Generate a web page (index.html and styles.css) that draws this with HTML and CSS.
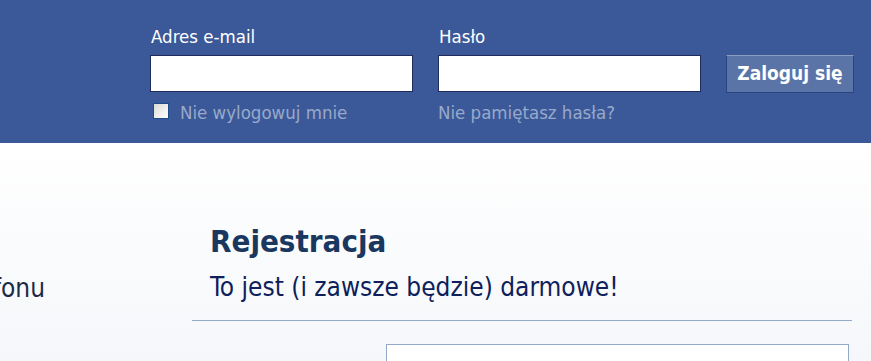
FILE: index.html
```html
<!DOCTYPE html>
<html lang="pl">
<head>
<meta charset="UTF-8" />
<title>Facebook - logowanie</title>
<link rel="stylesheet" href="styles.css">
</head>
<body>

  <div class="topbar">
    <form class="login" onsubmit="return false;">
      <div class="login-field">
        <label class="field-label" for="email">Adres e-mail</label>
        <input type="text" id="email" class="login-input" />
        <label class="keep" for="persist">
          <input type="checkbox" id="persist" class="keep-box" />
          <span>Nie wylogowuj mnie</span>
        </label>
      </div>
      <div class="login-field">
        <label class="field-label" for="pass">Hasło</label>
        <input type="password" id="pass" class="login-input" />
        <a class="forgot" href="#">Nie pamiętasz hasła?</a>
      </div>
      <div class="login-field">
        <span class="field-label">&nbsp;</span>
        <button type="submit" class="login-btn">Zaloguj się</button>
      </div>
    </form>
  </div>

  <div class="content">
    <div class="side">
      <p class="side-text"><span>telefonu</span></p>
    </div>
    <div class="signup">
      <div class="signup-head">
        <h1>Rejestracja</h1>
        <h2>To jest (i zawsze będzie) darmowe!</h2>
      </div>
      <div class="signup-form">
        <input type="text" class="signup-input" />
      </div>
    </div>
  </div>

</body>
</html>
```

FILE: styles.css
```css
html, body {
  margin: 0;
  padding: 0;
  height: 100vh;
  overflow: hidden;
  background: linear-gradient(#ffffff 143px, #f5f7fa 361px);
  font-family: "DejaVu Sans Condensed", "DejaVu Sans", sans-serif;
  font-stretch: condensed;
  color: #333;
}

.topbar {
  background: #3b5998;
  height: 143px;
  box-sizing: border-box;
  padding: 27px 0 0 150px;
}

.login {
  display: flex;
  gap: 25px;
}

.login-field {
  display: flex;
  flex-direction: column;
}

.field-label {
  color: #fff;
  font-size: 18.5px;
  height: 20px;
  line-height: 20px;
  margin-bottom: 8px;
  padding-left: 1px;
}

.login-input {
  width: 263px;
  height: 37px;
  box-sizing: border-box;
  border: 1px solid #1d2a5b;
  background: #fff;
  margin: 0;
  padding: 4px 6px;
  font-size: 16px;
}

.keep {
  display: flex;
  align-items: flex-start;
  margin-top: 11px;
  padding-left: 3px;
  color: #98a9ca;
  font-size: 18.5px;
  line-height: 20px;
}

.keep-box {
  appearance: none;
  width: 16px;
  height: 16px;
  margin: 0 11px 0 0;
  border: 1px solid #1d4d86;
  background: linear-gradient(135deg, #dcdcd6, #ffffff);
}

.forgot {
  margin-top: 11px;
  color: #98a9ca;
  font-size: 18.5px;
  line-height: 20px;
  text-decoration: none;
}

.login-btn {
  width: 128px;
  height: 38px;
  margin: 0;
  padding: 0 0 2px;
  border: 1px solid #29447e;
  border-top-color: #8a9cc2;
  background: #5b74a8;
  color: #fff;
  font-family: inherit;
  font-stretch: condensed;
  font-size: 19px;
  font-weight: bold;
  cursor: pointer;
}

.content {
  display: flex;
  padding-top: 80px;
}

.side {
  width: 192px;
}

.side-text {
  display: flex;
  justify-content: flex-end;
  width: 45px;
  margin: 50px 0 0;
  font-size: 26px;
  line-height: 30px;
  color: #1c2a47;
  white-space: nowrap;
}

.signup {
  width: 660px;
}

.signup-head {
  padding: 0 0 18px 18px;
  border-bottom: 1px solid #94a9c9;
}

.signup h1 {
  margin: 0;
  font-size: 31px;
  line-height: 36px;
  color: #1a3760;
}

.signup h2 {
  margin: 13px 0 0;
  font-size: 26px;
  line-height: 30px;
  font-weight: normal;
  color: #0e1f5b;
}

.signup-form {
  display: flex;
  justify-content: flex-end;
  padding: 23px 3px 0 0;
}

.signup-input {
  width: 463px;
  height: 17px;
  box-sizing: border-box;
  border: 1px solid #94a9c9;
  border-bottom: none;
  background: #fff;
  margin: 0;
  padding: 0;
}
```
